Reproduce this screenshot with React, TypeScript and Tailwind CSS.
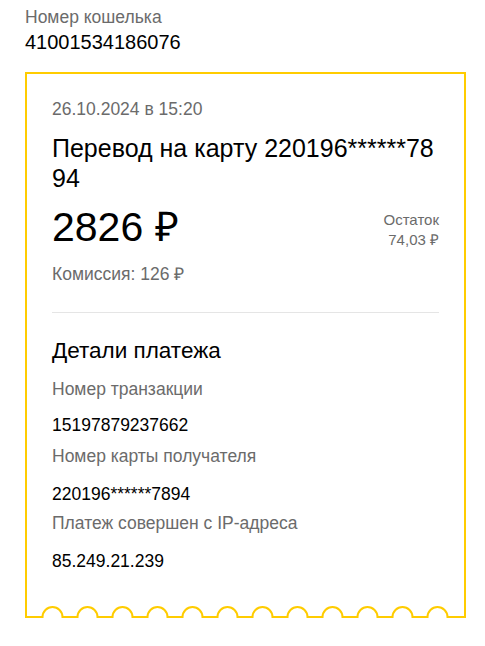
import React from "react";

const Y = "#ffcc00";

function Scallop() {
  const w = 441;
  const y = 11;
  let d = `M1 0 L1 ${y} `;
  for (let i = 0; i < 12; i++) {
    const cx = 27.5 + i * 35;
    d += `L${cx - 10} ${y} A10 10 0 0 1 ${cx + 10} ${y} `;
  }
  d += `L${w - 1} ${y} L${w - 1} 0`;
  return (
    <svg width={w} height={12} viewBox={`0 0 ${w} 12`} className="block">
      <path d={d} fill="none" stroke={Y} strokeWidth={2} />
    </svg>
  );
}

export default function App() {
  const font = { fontFamily: '"Liberation Sans", Arial, sans-serif' };
  return (
    <div className="bg-white w-[485px] h-[646px] pt-[5px] pl-[25px]" style={font}>
      <div className="text-[17.5px] leading-[24px] text-[#6b6b6b]">Номер кошелька</div>
      <div className="text-[20px] leading-[26px] text-black">41001534186076</div>
      <div className="mt-[17px] w-[441px]">
        <div className="border-t-2 border-x-2 border-[#ffcc00] pt-[23px] px-[25px] pb-[33px]">
          <div className="text-[17.5px] leading-[24px] text-[#6b6b6b]">26.10.2024 в 15:20</div>
          <div className="mt-[12px] text-[25px] leading-[30px] text-black break-all">
            Перевод на карту 220196******7894
          </div>
          <div className="mt-[10px] flex justify-between items-start">
            <div className="text-[41px] leading-[48px] text-black">2826 ₽</div>
            <div className="mt-[7px] text-right text-[15px] leading-[20px] text-[#6b6b6b]">
              <div>Остаток</div>
              <div>74,03 ₽</div>
            </div>
          </div>
          <div className="mt-[11px] text-[17.5px] leading-[24px] text-[#6b6b6b]">Комиссия: 126 ₽</div>
          <div className="mt-[26px] h-px bg-[#e5e5e5]" />
          <div className="mt-[24px] text-[22.5px] leading-[28px] text-black">Детали платежа</div>
          <div className="mt-[12px] text-[17.5px] leading-[24px] text-[#6b6b6b]">Номер транзакции</div>
          <div className="mt-[12px] text-[17.5px] leading-[24px] text-black">15197879237662</div>
          <div className="mt-[7px] text-[17.5px] leading-[24px] text-[#6b6b6b]">Номер карты получателя</div>
          <div className="mt-[14px] text-[17.5px] leading-[24px] text-black">220196******7894</div>
          <div className="mt-[5px] text-[17.5px] leading-[24px] text-[#6b6b6b]">Платеж совершен с IP-адреса</div>
          <div className="mt-[14px] text-[17.5px] leading-[24px] text-black">85.249.21.239</div>
        </div>
        <Scallop />
      </div>
    </div>
  );
}
